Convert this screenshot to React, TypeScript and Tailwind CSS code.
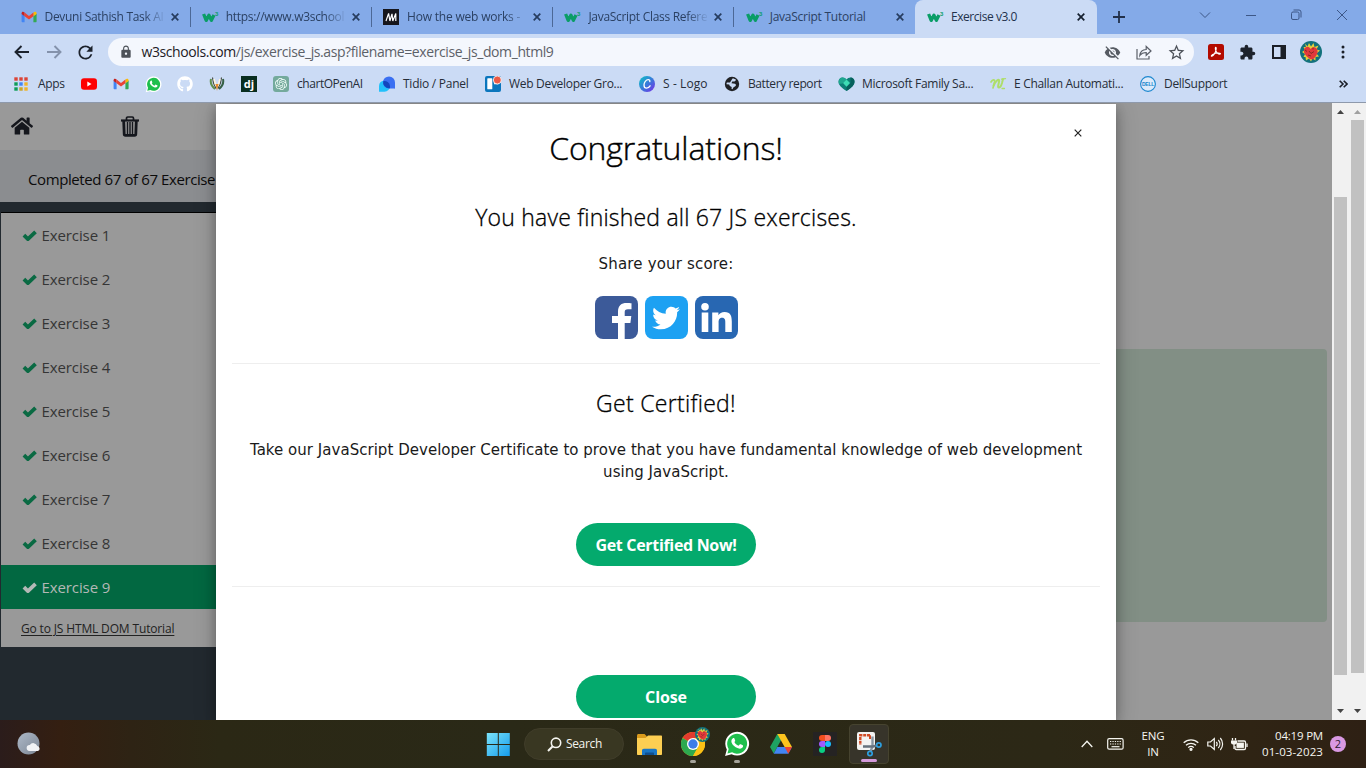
import React from "react";
import { FaGithub, FaHome, FaTwitter } from "react-icons/fa";
import { SiOpenai } from "react-icons/si";
import { MdExtension, MdLock, MdRefresh, MdStarOutline, MdVisibilityOff } from "react-icons/md";

const UI = "font-['Open_Sans','Noto_Sans',sans-serif]";

/* ---------- small drawings ---------- */

function GmailIcon() {
  return (
    <svg width="16" height="16" viewBox="0 0 16 16">
      <path d="M1 13.2h2.6V7L0.6 4.6v7.6c0 .6.4 1 1 1z" fill="#4285f4" />
      <path d="M12.4 13.2H15c.4 0 .6-.4.6-1V4.6L12.4 7z" fill="#34a853" />
      <path d="M0.6 4.2v.8l3 2.3V3.6L2.6 2.9C1.6 2.2.6 3 .6 4.2z" fill="#c5221f" />
      <path d="M12.4 3.6v3.7l3.2-2.3v-.8c0-1.2-1.2-2-2.2-1.3z" fill="#fbbc04" />
      <path d="M3.6 7.3V3.6L8 6.9l4.4-3.3v3.7L8 10.6z" fill="#ea4335" />
    </svg>
  );
}

function W3Icon() {
  return (
    <svg width="17" height="16" viewBox="0 0 17 16">
      <path d="M1.6 5 L4.2 11.4 L6.9 6.2 L9.4 11.4 L12 6" fill="none" stroke="#0a9d67" strokeWidth="3.3" strokeLinejoin="round" />
      <text x="13" y="7" fontSize="6" fontWeight="700" fill="#0a9d67" fontFamily="Liberation Sans, sans-serif">3</text>
    </svg>
  );
}

function MdnIcon() {
  return (
    <svg width="16" height="16" viewBox="0 0 16 16">
      <rect width="16" height="16" fill="#16161c" />
      <path d="M3 12 L5.6 4.4 M6.9 12 L9 4.8 M5.6 4.4 L6.9 12 M9 4.8 L9.8 12 L12.8 4.4 V12" fill="none" stroke="#fff" strokeWidth="1.2" />
    </svg>
  );
}

function CloseX({ className, weight = 1.7 }: { className: string; weight?: number }) {
  return (
    <svg width="8" height="8" viewBox="0 0 8 8" className={`shrink-0 ${className}`}>
      <path d="M0.7 0.7 L7.3 7.3 M7.3 0.7 L0.7 7.3" stroke="currentColor" strokeWidth={weight} />
    </svg>
  );
}

function AppsIcon() {
  const colors = ["#db4437", "#db4437", "#db4437", "#0f9d58", "#4285f4", "#f0b429", "#0f9d58", "#c9a62b", "#f0b429"];
  return (
    <svg width="14" height="14" viewBox="0 0 14 14">
      {colors.map((c, i) => (
        <rect key={i} x={(i % 3) * 5 + 0.3} y={Math.floor(i / 3) * 5 + 0.3} width="3.4" height="3.4" fill={c} />
      ))}
    </svg>
  );
}

function YoutubeMark() {
  return (
    <svg width="16" height="16" viewBox="0 0 16 16">
      <rect y="2.3" width="16" height="11.4" rx="3" fill="#fe0000" />
      <path d="M6.3 5.6v4.8L10.5 8z" fill="#fff" />
    </svg>
  );
}

function WhatsMark({ size }: { size: number }) {
  return (
    <svg width={size} height={size} viewBox="0 0 24 24">
      <path d="M1 23l1.600-5.900A11 11 0 1 1 7 21.400z" fill="#fff" />
      <path d="M3.200 20.800l1.100-4.200A9.200 9.200 0 1 1 7.500 19.700z" fill="#1fbf4d" />
      <path d="M8.200 6.700c.5-.5 1.100-.4 1.300.1l.8 1.900c.1.400 0 .7-.7 1.500.8 1.700 2 2.700 3.800 3.500l1.100-1.300c.3-.3.500-.3.900-.1l1.900.9c.4.200.4.700.2 1.400-.5 1.500-2.500 2.100-4.500 1.400-3.200-1.100-5.300-3.300-6.100-5.700-.4-1.500.4-2.900 1.300-3.600z" fill="#fff" />
    </svg>
  );
}

function WreathIcon() {
  return (
    <svg width="16" height="16" viewBox="0 0 16 16" fill="none">
      <path d="M2 3c-1 4 .5 7 4 10" stroke="#5f8f4e" strokeWidth="2" />
      <path d="M14 3c1 4-.5 7-4 10" stroke="#356046" strokeWidth="2" />
      <path d="M3.500 1.500c.2 5 1.500 8 3.500 11M12.500 1.500c-.2 5-1.500 8-3.500 11" stroke="#3f4437" strokeWidth="1.100" />
      <path d="M5 3l2 7M11 3L9 10" stroke="#fff4dc" strokeWidth="1.500" />
      <path d="M6.500 8L8 15l1.500-7z" fill="#e58a28" />
    </svg>
  );
}

function DjIcon() {
  return (
    <div className="flex h-4 w-4 items-center justify-center bg-[#092e20] pb-0.5 font-['Open_Sans',sans-serif] text-[11px] leading-none font-bold text-white">
      dj
    </div>
  );
}

function OpenAiMark() {
  return (
    <div className="flex h-4 w-4 items-center justify-center rounded-[3px] bg-[#74aa9c]">
      <SiOpenai size={12} color="#f4fffb" />
    </div>
  );
}

function TidioIcon() {
  return (
    <svg width="17" height="16" viewBox="0 0 17 16">
      <path d="M0 15.800V10a5.500 5.500 0 0 1 11 0 5.800 5.800 0 0 1-5.500 5.800z" fill="#22c1fb" />
      <path d="M16 13V6.500A6 6 0 1 0 10 12.400h5.600z" fill="#3a6ff2" />
      <path d="M4.200 5.200a5.500 5.500 0 0 1 6.800 5v2.100H10A6 6 0 0 1 4.200 5.200z" fill="#1247bd" />
    </svg>
  );
}

function TrelloIcon() {
  return (
    <svg width="17" height="16" viewBox="0 0 17 16">
      <rect y="0" width="16" height="16" rx="2" fill="#0b76bd" />
      <rect x="2.300" y="2.300" width="5" height="11" rx=".6" fill="#fff" />
      <rect x="9" y="2.300" width="4.700" height="6" rx=".6" fill="#fff" />
      <circle cx="12.300" cy="4" r="4" fill="#eb5a46" stroke="#fff" strokeWidth=".8" />
    </svg>
  );
}

function CanvaIcon() {
  return (
    <svg width="16" height="16" viewBox="0 0 16 16">
      <defs>
        <linearGradient id="canva" x1="0" y1="0" x2="1" y2="1">
          <stop offset=".1" stopColor="#12b7c8" />
          <stop offset=".55" stopColor="#3e73dc" />
          <stop offset="1" stopColor="#7d2ae8" />
        </linearGradient>
      </defs>
      <circle cx="8" cy="8" r="8" fill="url(#canva)" />
      <path d="M10.800 5.600c.3-1.400-.5-2-1.500-2C7 3.600 5 6.300 5 9c0 2 1 3.200 2.500 3.200 1.600 0 2.700-1 3.600-2.400" fill="none" stroke="#fff" strokeWidth="1.300" strokeLinecap="round" />
    </svg>
  );
}

function GlobeIcon() {
  return (
    <svg width="16" height="16" viewBox="0 0 16 16">
      <circle cx="8" cy="8" r="7.200" fill="#202124" />
      <path d="M8.500 2.600c1.500 0 2.700.5 3.600 1.500L10.500 5.600 8.200 5.600 7.500 7.300l3.500.5c1 .4 1.200 1.300.6 2.200L9.300 11.500l-.8 1.700-1-.4.2-1.900-1.900-1-.6-1.400-2.700-.2c0-.7.100-1.300.4-1.800L6 6.400z" fill="#cbdbf4" />
    </svg>
  );
}

function FamilyIcon() {
  return (
    <svg width="17" height="16" viewBox="0 0 17 16">
      <path d="M8.500 15C3 11.500.5 9 .5 5.600A4 4 0 0 1 4.500 1.500c1.700 0 3 .7 4 2 1-1.300 2.300-2 4-2a4 4 0 0 1 4 4.100c0 3.400-2.500 5.900-8 9.400z" fill="#0c7f76" />
      <path d="M4.500 1.500c1.700 0 3 .7 4 2L4.500 7.500 1 8C0 5 1.500 1.500 4.500 1.500z" fill="#1fa78f" />
      <path d="M12.500 1.500a4 4 0 0 1 4 4.100c0 3.400-2.500 5.900-8 9.400V11l4-4z" fill="#07615c" />
      <path d="M8.500 3.500l3.500 3.500-3.500 3.700L5 7z" fill="#3ddcb4" />
    </svg>
  );
}

function ChallanIcon() {
  return (
    <svg width="17" height="16" viewBox="0 0 17 16" fill="none" stroke="#aede6a" strokeLinecap="round">
      <path d="M1 6c1.500-2.500 4-3 3.600-.3L3 12" strokeWidth="1.700" />
      <path d="M3.600 9.500C5.500 5 9 2.200 9.200 4.500 9.300 6.500 7 11.500 8.800 11.500c1.500 0 2.500-2 3.200-4.500l1-4" strokeWidth="2" />
      <path d="M11.500 3.200L15.500 2.600M12 12.500h2.500" strokeWidth="1.300" />
    </svg>
  );
}

function DellIcon() {
  return (
    <svg width="16" height="16" viewBox="0 0 16 16">
      <circle cx="8" cy="8" r="7.400" fill="#dceafa" stroke="#1b87cf" strokeWidth="1.100" />
      <text x="8" y="9.900" textAnchor="middle" fontSize="5" fontWeight="700" fill="#1b87cf" fontFamily="Liberation Sans, sans-serif">DELL</text>
    </svg>
  );
}

function AcrobatIcon() {
  return (
    <svg width="16" height="16" viewBox="0 0 16 16">
      <rect width="16" height="16" rx="2.500" fill="#b30b00" />
      <path d="M7.700 3.300c.8 0 .6 2.300-.2 4.300-.9 2.300-2.700 4.500-3.700 4.700-1 .1-.4-1.300 2-2.400 2-.9 5.700-1.300 6.500-.5.700.9-1.200 1.200-3-.4C7.400 7.500 6.900 3.300 7.700 3.300z" fill="none" stroke="#fff" strokeWidth="1.100" />
    </svg>
  );
}

function Avatar({ size }: { size: number }) {
  return (
    <svg width={size} height={size} viewBox="0 0 22 22">
      <circle cx="11" cy="11" r="11" fill="#12717c" />
      <path d="M5 2.500l2.500 3L9 2l2 3.500L13.500 2l1 4 4-1.500-2 4 3.500 1-3.500 3 2.500 3-3.500.5v3.500l-3-2-1.500 3-2-3-3 2-.5-3.500H3.500L5 13l-3-2 3-2-1.500-3H6z" fill="#e3cf3a" />
      <path d="M4.500 7.500c2-2.500 4.500-2 6 .5 2-2.500 5-2.500 6.500 0 1.500 3 0 6.500-3 9.500-1.500 1.500-4 1-6-1-3.500-3-5-6-3.500-9z" fill="#e2393c" />
      <path d="M5 9l2 1.500M9 10l2 2.500 3-2M8 14l3 1M13 6.500v2" stroke="#74251e" strokeWidth=".8" fill="none" />
    </svg>
  );
}

function TrashIcon() {
  return (
    <svg width="18" height="21" viewBox="0 0 18 21" fill="none" stroke="#15171d">
      <path d="M0 4.500h18" strokeWidth="2.200" />
      <path d="M5.500 4V2.200C5.500 1.500 6 1 6.700 1h4.600c.7 0 1.200.5 1.200 1.200V4" strokeWidth="1.700" />
      <path d="M2.700 5l.5 13c0 .8.600 1.300 1.300 1.300h9c.7 0 1.300-.5 1.300-1.300L15.300 5" strokeWidth="2.800" />
      <path d="M6.500 6v12M9 6v12M11.500 6v12" strokeWidth="1.400" />
    </svg>
  );
}

function CheckIcon({ className }: { className: string }) {
  return (
    <svg width="16" height="13" viewBox="0 0 16 13" className={`shrink-0 ${className}`}>
      <path d="M1.900 6.200L5.900 10.100L13.500 2.900" fill="none" stroke="currentColor" strokeWidth="3.800" strokeLinejoin="round" />
    </svg>
  );
}

function ChromeIcon() {
  return (
    <svg width="24" height="24" viewBox="0 0 24 24">
      <circle cx="12" cy="12" r="12" fill="#fbc116" />
      <path d="M12 12L1.600 6A12 12 0 0 1 22.400 6z" fill="#e33b2e" />
      <path d="M12 12L1.600 6A12 12 0 0 0 12 24l5.200-9z" fill="#2da94f" />
      <path d="M12 6h10.400A12 12 0 0 1 12 24l5.200-9z" fill="#fbc116" />
      <circle cx="12" cy="12" r="6" fill="#fff" />
      <circle cx="12" cy="12" r="4.700" fill="#3d7de8" />
    </svg>
  );
}

/* ---------- browser chrome ---------- */

type Tab = { title: string; icon: React.ReactNode; track: string };

const tabs: Tab[] = [
  { title: "Devuni Sathish Task AI", icon: <GmailIcon />, track: "tracking-[-0.3px]" },
  { title: "https://www.w3school", icon: <W3Icon />, track: "tracking-[-0.3px]" },
  { title: "How the web works -", icon: <MdnIcon />, track: "tracking-[-0.2px]" },
  { title: "JavaScript Class Refere", icon: <W3Icon />, track: "tracking-[-0.3px]" },
  { title: "JavaScript Tutorial", icon: <W3Icon />, track: "tracking-[-0.25px]" },
];

function TabStrip() {
  return (
    <div className="flex h-[34px] shrink-0 items-stretch bg-[#84aae8] pl-[9.5px] text-[12px] text-[#2b4163]">
      {tabs.map((t, i) => (
        <div key={i} className="flex w-[181.3px] shrink-0 items-center pl-[11px]">
          <span className="flex w-6 shrink-0">{t.icon}</span>
          <span className={`w-[119px] shrink-0 whitespace-nowrap ${i === 4 ? "" : "[mask-image:linear-gradient(to_right,#000_99px,transparent_121px)]"} ${t.track}`}>{t.title}</span>
          <CloseX className="ml-[7px] text-[#263c5f]" />
          <span className={i < 4 ? "ml-[11px] h-5 w-px shrink-0 bg-[#4c6896]" : ""} />
        </div>
      ))}
      <div className="-ml-px flex h-[34px] w-[182px] items-center rounded-t-lg bg-[#cbdbf5] pl-3 text-[#23324c]">
        <span className="flex w-6"><W3Icon /></span>
        <span className="w-[119px] tracking-[-0.45px]">Exercise v3.0</span>
        <CloseX className="ml-[7px] text-[#16202f]" />
      </div>
      <div className="flex flex-1 items-center">
        <svg width="12" height="12" viewBox="0 0 12 12" className="ml-[16px] text-[#22304a]">
          <path d="M6 0v12M0 6h12" stroke="currentColor" strokeWidth="1.800" />
        </svg>
        <svg width="150" height="12" viewBox="0 0 150 12" className="mb-[5px] ml-[73px]" fill="none" stroke="#3d5787">
          <path d="M2 3.500l5 5 5-5M48 6.500h10M139 1l10 10M149 1l-10 10" />
          <rect x="93.500" y="3" width="7.500" height="7.500" rx="1.500" />
          <path d="M95.500 1h5.500a2 2 0 0 1 2 2v5.500" />
        </svg>
      </div>
    </div>
  );
}

function Toolbar() {
  return (
    <div className="flex h-9 shrink-0 items-center pl-3.5 text-[#1c222c]">
      <svg width="48" height="14" viewBox="0 0 48 14" fill="none" strokeWidth="1.900">
        <path d="M15 7H1.500M7.500 1L1.500 7l6 6" stroke="#1b222d" />
        <path d="M33 7h13.500M40.500 1l6 6-6 6" stroke="#8492ab" />
      </svg>
      <MdRefresh size={21} className="ml-[13px] shrink-0" />
      <div className="ml-[11.500px] flex h-7 w-[1086px] shrink-0 items-center rounded-full bg-[#f4f7fd] pl-[11px]">
        <MdLock size={14} className="text-[#4d5259]" />
        <span className="mb-px ml-[9px] w-[961px] text-[14px] tracking-[-0.41px] text-[#5c6168]">
          <span className="text-[#1d2025]">w3schools.com</span>/js/exercise_js.asp?filename=exercise_js_dom_html9
        </span>
        <MdVisibilityOff size={17} className="ml-px text-[#565b63]" />
        <svg width="16" height="15" viewBox="0 0 16 15" className="ml-[15px]" fill="none" stroke="#5b6069" strokeWidth="1.200">
          <path d="M1 4v10h12v-3" />
          <path d="M3.800 10.500C4.200 6.500 6.800 4.600 10.200 4.500V1.500L15 6l-4.800 4.300V7.500C7.500 7.500 5.400 8.300 3.800 10.500z" />
        </svg>
        <MdStarOutline size={19} className="ml-[15px] text-[#4d525a]" />
      </div>
      <span className="ml-[14px]"><AcrobatIcon /></span>
      <MdExtension size={17} className="ml-[15.500px]" />
      <svg width="14" height="14" viewBox="0 0 14 14" className="ml-4">
        <rect x="1" y="1" width="12" height="12" fill="none" stroke="#1b1f27" strokeWidth="2" />
        <rect x="8.500" width="5.500" height="14" fill="#1b1f27" />
      </svg>
      <span className="ml-[14px]"><Avatar size={22} /></span>
      <svg width="4" height="14" viewBox="0 0 4 14" className="ml-[19px]" fill="#1b1f27">
        <circle cx="2" cy="2" r="1.500" /><circle cx="2" cy="7" r="1.500" /><circle cx="2" cy="12" r="1.500" />
      </svg>
    </div>
  );
}

const bookmarks: { icon: React.ReactNode; label?: string; slot: string }[] = [
  { icon: <AppsIcon />, label: "Apps", slot: "w-[67px] tracking-[-0.3px]" },
  { icon: <YoutubeMark />, slot: "w-8" },
  { icon: <GmailIcon />, slot: "w-8" },
  { icon: <WhatsMark size={17} />, slot: "w-8" },
  { icon: <FaGithub size={16} color="#fff" />, slot: "w-8" },
  { icon: <WreathIcon />, slot: "w-8" },
  { icon: <DjIcon />, slot: "w-8" },
  { icon: <OpenAiMark />, label: "chartOPenAI", slot: "w-[106px] tracking-[-0.45px]" },
  { icon: <TidioIcon />, label: "Tidio / Panel", slot: "w-[106px] tracking-[-0.25px]" },
  { icon: <TrelloIcon />, label: "Web Developer Gro...", slot: "w-[154px] tracking-[-0.3px]" },
  { icon: <CanvaIcon />, label: "S - Logo", slot: "w-[85px] tracking-[0.1px]" },
  { icon: <GlobeIcon />, label: "Battery report", slot: "w-[114px] tracking-[-0.4px]" },
  { icon: <FamilyIcon />, label: "Microsoft Family Sa...", slot: "w-[152px] tracking-[-0.3px]" },
  { icon: <ChallanIcon />, label: "E Challan Automati...", slot: "w-[150px] tracking-[-0.3px]" },
  { icon: <DellIcon />, label: "DellSupport", slot: "w-[199px] tracking-[-0.3px]" },
];

function BookmarkBar() {
  return (
    <div className="flex h-7 shrink-0 items-center pl-3.5 text-[12px] text-[#262d38]">
      {bookmarks.map((b, i) => (
        <div key={i} className={`flex shrink-0 items-center whitespace-nowrap ${b.slot}`}>
          <span className="flex w-6 shrink-0">{b.icon}</span>
          {b.label}
        </div>
      ))}
      <svg width="9" height="8" viewBox="0 0 9 8" fill="none" stroke="#1b1f27" strokeWidth="1.600">
        <path d="M.7.7L4 4 .7 7.300M4.700.7L8 4 4.700 7.300" />
      </svg>
    </div>
  );
}

/* ---------- page ---------- */

function Sidebar() {
  return (
    <aside className="flex w-[216px] shrink-0 flex-col bg-[#22292f]">
      <div className="flex h-[47px] shrink-0 items-center bg-[#999] pl-[11px]">
        <FaHome size={22} color="#15171d" className="mb-0.5" />
        <span className="ml-[88px] pb-px"><TrashIcon /></span>
      </div>
      <div className="flex h-[52px] shrink-0 items-center bg-[#8b8d90] pt-1.5 pl-7 text-[15px] tracking-[-0.4px] whitespace-nowrap text-[#0b0b0b]">
        Completed 67 of 67 Exercise
      </div>
      <div className="mt-2.5 ml-px border-t border-black bg-[#999]">
        {[1, 2, 3, 4, 5, 6, 7, 8, 9].map((n) => (
          <div
            key={n}
            className={`flex h-11 items-center pl-[21px] text-[15px] tracking-[-0.1px] ${n === 9 ? "bg-[#026841] text-[#b4b8b6]" : "text-[#353535]"}`}
          >
            <CheckIcon className={`mr-[3.500px] ${n === 9 ? "text-[#b4b8b6]" : "text-[#0a6a43]"}`} />
            Exercise {n}
          </div>
        ))}
        <div className="flex h-[38px] items-center pt-px pl-5 text-[12px] tracking-[-0.15px] text-[#222] underline underline-offset-2">
          Go to JS HTML DOM Tutorial
        </div>
      </div>
    </aside>
  );
}

function SocialIcons() {
  return (
    <div className="mt-[21px] flex h-[43px] justify-center gap-[7px]">
      <svg width="43" height="43" viewBox="0 0 43 43">
        <rect width="43" height="43" rx="8" fill="#3c5a99" />
        <path d="M23 43V27h-6v-7h6v-4.500C23 9.500 26.500 7 31.500 7c2 0 4 .1 5 .3v6h-3.500c-2.700 0-3.300 1.200-3.300 3.200V20h6.600l-.9 7h-5.700v16z" fill="#fff" />
      </svg>
      <span className="flex h-[43px] w-[43px] items-center justify-center rounded-lg bg-[#1da1f2]">
        <FaTwitter size={28} color="#fff" />
      </span>
      <svg width="43" height="43" viewBox="0 0 43 43">
        <rect width="43" height="43" rx="8" fill="#2867b2" />
        <circle cx="10" cy="10.800" r="3.800" fill="#fff" />
        <path d="M6.700 16.500h6.600V36H6.700zM17.200 16.500h6.200v2.800c1-1.800 3.200-3.300 6.200-3.300 6 0 7.200 4 7.200 9.500V36h-6.500v-9.300c0-2.600-.2-5-3.200-5-3.100 0-3.500 2.500-3.500 5V36h-6.400z" fill="#fff" />
      </svg>
    </div>
  );
}

function Modal() {
  return (
    <main className="relative z-10 mt-px flex w-[900px] shrink-0 flex-col items-center bg-white text-black shadow-[0_4px_10px_rgba(0,0,0,0.2),0_4px_20px_rgba(0,0,0,0.25)]">
      <div className="flex h-[22px] w-full shrink-0 items-end justify-end pr-[34px]">
        <CloseX weight={1.2} className="translate-y-[11px] text-[#222]" />
      </div>
      <h1 className="flex h-11 items-center text-[32px] font-light tracking-[-0.12px] [-webkit-text-stroke:0.4px_#000]">Congratulations!</h1>
      <h2 className="mt-[29px] flex h-9 items-center text-[23px] font-light tracking-[0.2px] [-webkit-text-stroke:0.3px_#000]">You have finished all 67 JS exercises.</h2>
      <p className="mt-[18px] flex h-[22px] items-center font-['DejaVu_Sans',sans-serif] text-[15px] tracking-[0.17px] text-[#1a1a1a]">Share your score:</p>
      <SocialIcons />
      <hr className="mt-6 w-[868px] border-[#eee]" />
      <h2 className="mt-[21px] flex h-9 items-center text-[23px] font-light tracking-[0.3px] [-webkit-text-stroke:0.3px_#000]">Get Certified!</h2>
      <p className="mt-[18px] h-[44px] text-center font-['DejaVu_Sans',sans-serif] text-[15px] leading-[22px] tracking-[0.03px] whitespace-nowrap text-[#1a1a1a]">
        Take our JavaScript Developer Certificate to prove that you have fundamental knowledge of web development
        <br />
        using JavaScript.
      </p>
      <button className="mt-10 h-[43px] w-[180px] shrink-0 rounded-full bg-[#04aa6d] text-[16px] font-bold tracking-[-0.32px] text-white">Get Certified Now!</button>
      <hr className="mt-5 w-[868px] border-[#eee]" />
      <button className="mt-[88px] h-[43px] w-[180px] shrink-0 rounded-full bg-[#04aa6d] text-[16px] font-bold tracking-[-0.1px] text-white">Close</button>
    </main>
  );
}

function Arrow({ up, className }: { up?: boolean; className: string }) {
  return (
    <svg width="7" height="4" viewBox="0 0 7 4" className={`shrink-0 ${className}`} fill="currentColor">
      <path d={up ? "M0 4L3.500 0 7 4z" : "M0 0h7L3.500 4z"} />
    </svg>
  );
}

function Scrollbars() {
  return (
    <div className="flex w-[34px] shrink-0 bg-[#f1f1f1]">
      <div className="flex w-[17px] flex-col items-center">
        <Arrow up className="mt-[7px] text-[#444]" />
        <span className="mt-[83px] h-[478px] w-[13px] bg-[#c1c1c1]" />
        <Arrow className="mt-[34px] text-[#444]" />
      </div>
      <div className="flex w-[17px] flex-col items-center">
        <Arrow up className="mt-[7px] text-[#a0a0a0]" />
        <span className="mt-[6px] h-[553px] w-[13px] bg-[#c1c1c1]" />
        <Arrow className="mt-9 text-[#444]" />
      </div>
    </div>
  );
}

/* ---------- taskbar ---------- */

function Tile({ children, className = "", mark }: { children: React.ReactNode; className?: string; mark?: string }) {
  return (
    <div className={`relative flex h-10 w-10 shrink-0 items-center justify-center rounded ${className}`}>
      {children}
      {mark && <span className={`absolute bottom-[1px] h-[3px] rounded-full ${mark}`} />}
    </div>
  );
}

function Taskbar() {
  return (
    <footer className="relative flex h-12 shrink-0 items-center bg-[linear-gradient(90deg,#2b1c1b_0px,#341f11_60px,#2e2314_130px,#2b2815_220px,#2a2917_500px,#2c2816_1050px,#2f2414_1250px,#2e2014_1366px)] text-[#f5f5f0]">
      <svg width="24" height="24" viewBox="0 0 24 24" className="ml-[17px]">
        <defs>
          <linearGradient id="moon" x1="0" y1="0" x2="1" y2="1"><stop stopColor="#aeb9c8" /><stop offset="1" stopColor="#7c8795" /></linearGradient>
        </defs>
        <circle cx="11.500" cy="11.500" r="11" fill="url(#moon)" />
        <path d="M12.500 19a3 3 0 0 1 .3-6 4.200 4.200 0 0 1 7.500 1 2.600 2.600 0 0 1 .7 5z" fill="#f1f3f6" />
      </svg>
      <svg width="24" height="24" viewBox="0 0 24 24" className="ml-[445px]">
        <defs>
          <linearGradient id="win" x1="0" y1="0" x2="1" y2="1"><stop stopColor="#7be4fb" /><stop offset="1" stopColor="#159bec" /></linearGradient>
        </defs>
        <path d="M.800 1h11v11h-11zM12.800 1h11v11h-11zM.800 13h11v11h-11zM12.800 13h11v11h-11z" fill="url(#win)" />
      </svg>
      <div className="ml-[14px] flex h-8 w-[100px] items-center rounded-full border border-[#403d2a] bg-[#393722] pl-[22px] text-[12px] tracking-[-0.35px]">
        <svg width="15" height="15" viewBox="0 0 15 15" fill="none" stroke="currentColor" strokeWidth="1.600" className="mr-1">
          <circle cx="9" cy="5.800" r="4.700" /><path d="M5.700 9.300L1 14" strokeWidth="2" />
        </svg>
        Search
      </div>
      <Tile className="ml-[5px]">
        <svg width="25" height="23" viewBox="0 0 25 23">
          <path d="M0 2.500C0 1.600.6 1 1.500 1h6L10 3.500V6H0z" fill="#d99a1c" />
          <path d="M0 5h8.500L11 2.500h13c.6 0 1 .4 1 1V21c0 .6-.4 1-1 1H1c-.6 0-1-.4-1-1z" fill="#fcce52" />
          <path d="M5 22v-4.500c0-1 .8-1.800 1.800-1.800h11.400c1 0 1.800.8 1.800 1.800V22z" fill="#1976c5" />
          <path d="M8 22v-1.500c0-.6.5-1 1-1h7c.6 0 1 .4 1 1V22z" fill="#104f8f" />
        </svg>
      </Tile>
      <Tile className="ml-1" mark="w-[6px] bg-[#a5a39a]">
        <ChromeIcon />
        <span className="absolute top-[3px] right-[3px]"><Avatar size={15} /></span>
      </Tile>
      <Tile className="ml-1" mark="w-[6px] bg-[#a5a39a]"><WhatsMark size={26} /></Tile>
      <Tile className="ml-1">
        <svg width="22" height="20" viewBox="0 0 22 20">
          <path d="M7.300 0h7.200L11 6.300 3.700 19.500 0 13z" fill="#1ea362" />
          <path d="M7.300 0h7.400L22 13h-7.400z" fill="#fcc31e" />
          <path d="M7.300 13H22l-3.700 6.700H3.700z" fill="#4285f4" />
          <path d="M14.600 13H22l-3.700 6.700z" fill="#ea4335" />
        </svg>
      </Tile>
      <Tile className="ml-1">
        <span className="flex h-6 w-6 items-center justify-center bg-[#252323]">
          <svg width="12" height="18" viewBox="0 0 12 18">
            <path d="M3 0h3v6H3a3 3 0 0 1 0-6z" fill="#f24e1e" />
            <path d="M6 0h3a3 3 0 0 1 0 6H6z" fill="#ff7262" />
            <path d="M3 6h3v6H3a3 3 0 0 1 0-6z" fill="#a259ff" />
            <circle cx="9" cy="9" r="3" fill="#1abcfe" />
            <path d="M3 12h3v3a3 3 0 1 1-3-3z" fill="#0acf83" />
          </svg>
        </span>
      </Tile>
      <Tile className="ml-1 border border-[#46432f] bg-[#37342a]" mark="w-4 bg-[#d59adb]">
        <svg width="26" height="26" viewBox="0 0 26 26">
          <rect x="1" y="1" width="18" height="18" rx="2" fill="#f3f3f3" />
          <path d="M14 4.300H4.300V14" fill="none" stroke="#d04a25" strokeWidth="2.400" strokeDasharray="3 .8" />
          <path d="M14 4.300V8" fill="none" stroke="#d04a25" strokeWidth="2" />
          <path d="M16.500 5.500v10l-2 5" stroke="#8894a0" strokeWidth="2.400" fill="none" />
          <path d="M7 15.500h10l4-1" stroke="#66717d" strokeWidth="2.400" fill="none" />
          <circle cx="22.800" cy="14" r="2.200" fill="none" stroke="#2d9fe0" strokeWidth="1.700" />
          <circle cx="14" cy="22.500" r="2.200" fill="none" stroke="#2d9fe0" strokeWidth="1.700" />
        </svg>
      </Tile>
      <svg width="12" height="8" viewBox="0 0 12 8" className="ml-[192px]" fill="none" stroke="currentColor" strokeWidth="1.300"><path d="M.7 7L6 1.200 11.300 7" /></svg>
      <svg width="17" height="12" viewBox="0 0 17 12" className="ml-[14px]" fill="none" stroke="currentColor" strokeWidth="1.200">
        <rect x=".7" y=".7" width="15.400" height="10.500" rx="1.500" />
        <path d="M3 3.500h11M3 6h11" strokeDasharray="1.300 1.100" /><path d="M4.500 8.700h8" />
      </svg>
      <div className="ml-[9px] w-[40px] text-center text-[11.500px] leading-4 tracking-[-0.1px]">ENG<br />IN</div>
      <svg width="16" height="13" viewBox="0 0 16 13" className="ml-[10px]" fill="none" stroke="currentColor" strokeWidth="1.300">
        <path d="M.7 4.800a10.500 10.500 0 0 1 14.600 0M3 7.300a7.200 7.200 0 0 1 10 0M5.200 9.600a4 4 0 0 1 5.600 0" /><circle cx="8" cy="11.300" r="1" fill="currentColor" />
      </svg>
      <svg width="17" height="14" viewBox="0 0 17 14" className="ml-[8px]" fill="none" stroke="currentColor" strokeWidth="1.200">
        <path d="M.8 5v4h2.700L7.300 12.500V1.500L3.500 5zM9.300 4.800a3.500 3.500 0 0 1 0 4.400M11.300 3a6 6 0 0 1 0 8M13.300 1a9 9 0 0 1 0 12" />
      </svg>
      <svg width="17" height="13" viewBox="0 0 17 13" className="ml-[7px]" fill="none" stroke="currentColor" strokeWidth="1.300">
        <path d="M6.500 3h6.700c.8 0 1.300.5 1.300 1.300v5.900c0 .8-.5 1.300-1.300 1.300H5.300C4.500 11.500 4 11 4 10.200V8" />
        <rect x="5.500" y="4.600" width="7.400" height="5.300" fill="currentColor" stroke="none" /><path d="M16 5.500v3.500M1.500 0v2.500M4.500 0v2.500M3 6v5" /><path d="M0 2.500h6v2a2 2 0 0 1-2 2H2a2 2 0 0 1-2-2z" fill="currentColor" stroke="none" />
      </svg>
      <div className="ml-[5px] w-[70px] text-right text-[11.500px] leading-4 whitespace-nowrap">
        <span className="tracking-[-0.2px]">04:19 PM</span>
        <br />
        <span className="tracking-[0.1px]">01-03-2023</span>
      </div>
      <span className="ml-[7px] flex h-4 w-4 items-center justify-center rounded-full bg-[#d999e3] text-[11px] text-[#2c1a30]">2</span>
    </footer>
  );
}

export default function App() {
  return (
    <div className={`flex h-[768px] w-[1366px] flex-col overflow-hidden bg-[#cbdbf5] ${UI}`}>
      <TabStrip />
      <Toolbar />
      <BookmarkBar />
      <div className="h-[5px] shrink-0 border-b border-[#8e99ab]" />
      <div className="flex h-[617px] shrink-0 overflow-hidden bg-[#999]">
        <Sidebar />
        <Modal />
        <section className="flex w-[216px] shrink-0 flex-col pr-[5px]">
          <div className="mt-[246px] h-[273px] rounded-r bg-[#828f85]" />
        </section>
        <Scrollbars />
      </div>
      <Taskbar />
    </div>
  );
}
